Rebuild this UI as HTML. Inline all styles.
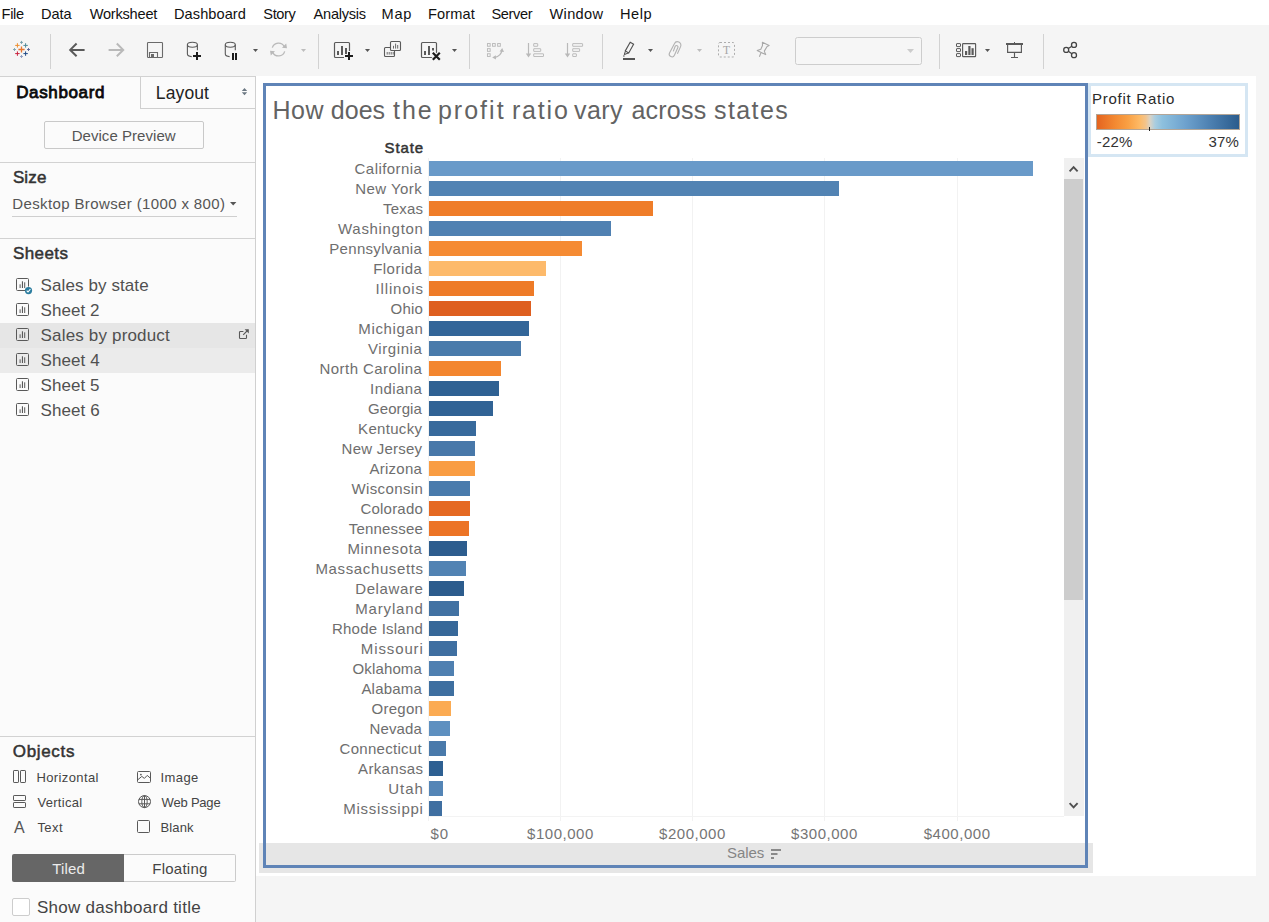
<!DOCTYPE html>
<html lang="en"><head><meta charset="utf-8"><title>Tableau - Dashboard</title>
<style>
html,body{margin:0;padding:0}
body{width:1269px;height:922px;overflow:hidden;background:#f5f5f5;font-family:"Liberation Sans",Arial,sans-serif;position:relative}
.t{position:absolute;white-space:nowrap;display:block}
#menubar{position:absolute;left:0;top:0;width:1269px;height:25px;background:#fff}
#toolbar{position:absolute;left:0;top:25px;width:1269px;height:51px;background:#f5f5f5}
#toolbar svg,#sidebar svg,#canvas svg{position:absolute;left:0;top:0;display:block}
#sidebar{position:absolute;left:0;top:76px;width:255px;height:846px;background:#fbfbfb;border-right:1px solid #d0d0d0}
#sidebar .topline{position:absolute;left:0;top:0;width:255px;height:1px;background:#d2d2d2}
#layouttab{position:absolute;left:140px;top:1px;width:114px;height:31px;border-left:1px solid #cfcfcf;border-bottom:1px solid #cfcfcf}
.hr{position:absolute;left:0;width:255px;height:1px;background:#d2d2d2}
#devbtn{position:absolute;left:44px;top:45px;width:158px;height:26px;border:1px solid #c9c9c9;border-radius:2px;background:#fbfbfb}
#sizeline{position:absolute;left:12px;top:140px;width:225px;height:1px;background:#cfcfcf}
.hl{position:absolute;left:0;width:255px;height:25px}
#tiled{position:absolute;left:12px;top:778px;width:112px;height:28px;background:#666;border-radius:2px 0 0 2px}
#floating{position:absolute;left:124px;top:778px;width:111px;height:26px;border:1px solid #cbcbcb;border-left:none;border-radius:0 2px 2px 0;background:#fbfbfb}
#chk{position:absolute;left:12px;top:822px;width:16px;height:16px;border:1px solid #cdcdcd;border-radius:2px;background:#fff}
#canvas{position:absolute;left:256px;top:76px;width:1000px;height:800px;background:#fff}
#band{position:absolute;left:3px;top:767px;width:834px;height:30px;background:#e6e6e6}
#sel{position:absolute;left:7px;top:7px;width:819px;height:779px;border:3px solid #5f84b7}
#legend{position:absolute;left:832px;top:7px;width:154px;height:68px;border:3px solid #d5e6f3;background:#fff}
</style></head>
<body>
<div id="menubar">
<span class="t" id="t0" style="left:1.50px;top:7px;font-size:14.6px;line-height:14.6px;color:#111;letter-spacing:-0.266px;">File</span>
<span class="t" id="t1" style="left:41.00px;top:7px;font-size:14.6px;line-height:14.6px;color:#111;letter-spacing:-0.070px;">Data</span>
<span class="t" id="t2" style="left:89.70px;top:7px;font-size:14.6px;line-height:14.6px;color:#111;letter-spacing:-0.229px;">Worksheet</span>
<span class="t" id="t3" style="left:174.00px;top:7px;font-size:14.6px;line-height:14.6px;color:#111;letter-spacing:0.065px;">Dashboard</span>
<span class="t" id="t4" style="left:263.30px;top:7px;font-size:14.6px;line-height:14.6px;color:#111;letter-spacing:-0.391px;">Story</span>
<span class="t" id="t5" style="left:313.60px;top:7px;font-size:14.6px;line-height:14.6px;color:#111;letter-spacing:-0.264px;">Analysis</span>
<span class="t" id="t6" style="left:381.60px;top:7px;font-size:14.6px;line-height:14.6px;color:#111;letter-spacing:0.713px;">Map</span>
<span class="t" id="t7" style="left:428.00px;top:7px;font-size:14.6px;line-height:14.6px;color:#111;letter-spacing:0.107px;">Format</span>
<span class="t" id="t8" style="left:491.50px;top:7px;font-size:14.6px;line-height:14.6px;color:#111;letter-spacing:-0.385px;">Server</span>
<span class="t" id="t9" style="left:549.40px;top:7px;font-size:14.6px;line-height:14.6px;color:#111;letter-spacing:0.367px;">Window</span>
<span class="t" id="t10" style="left:620.00px;top:7px;font-size:14.6px;line-height:14.6px;color:#111;letter-spacing:0.534px;">Help</span>
</div>
<div id="toolbar">
<svg id="tbicons" width="1269" height="51" viewBox="0 25 1269 51"><path d="M18.4 49.5H24.6M21.5 46.4V52.6" stroke="#e8762d" stroke-width="1.3"/>
<path d="M15.2 45.4H19.599999999999998M17.4 43.199999999999996V47.6" stroke="#ee8e2f" stroke-width="1.0"/>
<path d="M23.400000000000002 45.4H27.8M25.6 43.199999999999996V47.6" stroke="#4f8a9a" stroke-width="1.0"/>
<path d="M15.2 53.6H19.599999999999998M17.4 51.4V55.800000000000004" stroke="#c9203c" stroke-width="1.0"/>
<path d="M23.400000000000002 53.6H27.8M25.6 51.4V55.800000000000004" stroke="#1f4a86" stroke-width="1.0"/>
<path d="M20.0 42.4H23.0M21.5 40.9V43.9" stroke="#6f9ba8" stroke-width="0.9"/>
<path d="M20.0 56.5H23.0M21.5 55.0V58.0" stroke="#8b98bd" stroke-width="0.9"/>
<path d="M13.0 49.5H16.0M14.5 48.0V51.0" stroke="#7aa3b0" stroke-width="0.9"/>
<path d="M27.0 49.5H30.0M28.5 48.0V51.0" stroke="#5a6396" stroke-width="0.9"/>
<rect x="50" y="34" width="1" height="35" fill="#d2d2d2"/>
<rect x="318" y="34" width="1" height="35" fill="#d2d2d2"/>
<rect x="469" y="34" width="1" height="35" fill="#d2d2d2"/>
<rect x="602" y="34" width="1" height="35" fill="#d2d2d2"/>
<rect x="939" y="34" width="1" height="35" fill="#d2d2d2"/>
<rect x="1043" y="34" width="1" height="35" fill="#d2d2d2"/>
<path d="M84.6 49.9H70.6M76.6 43.5L70.2 49.9L76.6 56.3" fill="none" stroke="#5a5a5a" stroke-width="2"/>
<path d="M108.6 49.9H122.8M116.8 43.5L123.2 49.9L116.8 56.3" fill="none" stroke="#b9b9b9" stroke-width="2"/>
<rect x="147.5" y="42.5" width="15" height="15" rx="0.8" fill="none" stroke="#6a6a6a" stroke-width="1.1"/><path d="M149.5 57.5V52.5H157.5V57.5" fill="none" stroke="#6a6a6a" stroke-width="1.1"/><rect x="151" y="54" width="3" height="3.5" fill="#6a6a6a"/>
<ellipse cx="192.4" cy="44.8" rx="5" ry="2.5" fill="none" stroke="#5a5a5a" stroke-width="1.1"/><path d="M187.4 44.8V54c0 1.4 2 2.4 4.3 2.6M197.4 44.8V50.3" fill="none" stroke="#5a5a5a" stroke-width="1.1"/>
<path d="M192 56H202M197 51V61" stroke="#f5f5f5" stroke-width="4"/><path d="M193 56H201M197 52V60" stroke="#1c1c1c" stroke-width="2"/>
<ellipse cx="230.3" cy="44.8" rx="5" ry="2.5" fill="none" stroke="#5a5a5a" stroke-width="1.1"/><path d="M225.3 44.8V54c0 1.4 2 2.4 4.3 2.6M235.3 44.8V50.3" fill="none" stroke="#5a5a5a" stroke-width="1.1"/>
<rect x="231" y="52" width="7" height="9" fill="#f5f5f5"/><rect x="232" y="53" width="2" height="7" fill="#1c1c1c"/><rect x="235" y="53" width="2" height="7" fill="#1c1c1c"/>
<path d="M253 49h5l-2.5 3z" fill="#555"/>
<path d="M272.3 47.6A6.5 6.5 0 0 1 284.3 46.6M284.7 51.4A6.5 6.5 0 0 1 272.7 52.4" fill="none" stroke="#b9b9b9" stroke-width="1.3"/><path d="M282 47.8L287 48.2L286.2 43.4z M275 51.2L270 50.8L270.8 55.6z" fill="#b9b9b9"/>
<path d="M301 49h5l-2.5 3z" fill="#bdbdbd"/>
<rect x="334.5" y="42.5" width="15" height="15" rx="1" fill="none" stroke="#5a5a5a" stroke-width="1.2"/><rect x="337" y="51" width="2" height="4" fill="#5a5a5a"/><rect x="341" y="46" width="2" height="9" fill="#5a5a5a"/><rect x="345" y="48" width="2" height="7" fill="#5a5a5a"/>
<path d="M344 56H354M349 51V61" stroke="#f5f5f5" stroke-width="4"/><path d="M345 56H353M349 52V60" stroke="#1c1c1c" stroke-width="2"/>
<path d="M365 49h5l-2.5 3z" fill="#555"/>
<rect x="384.5" y="47.5" width="10" height="9" rx="1" fill="none" stroke="#5a5a5a" stroke-width="1.1"/><path d="M387.2 52v2.6M389.2 52v2.6M391.2 52v2.6M393.2 52v2.6" stroke="#5a5a5a" stroke-width="0.9"/><rect x="390.5" y="41.5" width="10" height="9" rx="1" fill="#f5f5f5" stroke="#5a5a5a" stroke-width="1.1"/><path d="M393.5 45.8v2.8M395.6 43.6v5M397.7 45v3.6" stroke="#5a5a5a" stroke-width="0.9"/>
<rect x="421.5" y="42.5" width="15" height="15" rx="1" fill="none" stroke="#5a5a5a" stroke-width="1.2"/><rect x="424" y="51" width="2" height="4" fill="#5a5a5a"/><rect x="428" y="46" width="2" height="9" fill="#5a5a5a"/><rect x="432" y="48" width="2" height="7" fill="#5a5a5a"/>
<path d="M431.5 51.5L441 61M441 51.5L431.5 61" stroke="#f5f5f5" stroke-width="4.2"/><path d="M432.8 52.8L439.8 59.8M439.8 52.8L432.8 59.8" stroke="#1c1c1c" stroke-width="2.2"/>
<path d="M452 49h5l-2.5 3z" fill="#555"/>
<rect x="487.45" y="43.55" width="2.7" height="2.7" rx="0" fill="none" stroke="#b9b9b9" stroke-width="0.95"/><rect x="492.55" y="43.55" width="2.7" height="2.7" rx="0" fill="none" stroke="#b9b9b9" stroke-width="0.95"/><rect x="497.65" y="43.55" width="2.7" height="2.7" rx="0" fill="none" stroke="#b9b9b9" stroke-width="0.95"/><rect x="487.45" y="48.65" width="2.7" height="2.7" rx="0" fill="none" stroke="#b9b9b9" stroke-width="0.95"/><rect x="487.45" y="53.75" width="2.7" height="2.7" rx="0" fill="none" stroke="#b9b9b9" stroke-width="0.95"/><path d="M494.5 57.6C499 56.6 501.5 54 502 50.2" fill="none" stroke="#b9b9b9" stroke-width="1.2"/><path d="M499.6 51.4L502.2 48L504 52z M495.8 55.2L492.2 57.6L496 59.6z" fill="#b9b9b9"/>
<path d="M528.5 43V55" stroke="#b9b9b9" stroke-width="1.2"/><path d="M525.8 53.4h5.4l-2.7 4z" fill="#b9b9b9"/><rect x="533.7" y="43.6" width="4.0" height="2.7" rx="0.25" fill="none" stroke="#b9b9b9" stroke-width="0.95"/><rect x="533.7" y="48.7" width="7.0" height="2.7" rx="0.25" fill="none" stroke="#b9b9b9" stroke-width="0.95"/><rect x="533.7" y="53.8" width="9.8" height="2.7" rx="0.25" fill="none" stroke="#b9b9b9" stroke-width="0.95"/>
<path d="M567.5 43V55" stroke="#b9b9b9" stroke-width="1.2"/><path d="M564.8 53.4h5.4l-2.7 4z" fill="#b9b9b9"/><rect x="572.7" y="43.6" width="9.9" height="2.7" rx="0.25" fill="none" stroke="#b9b9b9" stroke-width="0.95"/><rect x="572.7" y="48.7" width="6.9" height="2.7" rx="0.25" fill="none" stroke="#b9b9b9" stroke-width="0.95"/><rect x="572.7" y="53.8" width="3.7" height="2.7" rx="0.25" fill="none" stroke="#b9b9b9" stroke-width="0.95"/>
<rect x="623" y="58" width="12" height="2" fill="#555"/><path d="M630.2 42.3L633.6 44.3L628.7 52.9L625.3 50.9z" fill="none" stroke="#505050" stroke-width="1.1"/><path d="M625.4 51.2L624.3 54.6L628.5 52.9" fill="none" stroke="#444" stroke-width="1"/><circle cx="623.9" cy="56" r="0.7" fill="#444"/>
<path d="M648 49h5l-2.5 3z" fill="#555"/>
<path d="M677.4 53.8L680.6 46.6A3.4 3.4 0 0 0 674.4 43.8L669.5 53A2.7 2.7 0 0 0 674.4 55.3L677.9 47.6A1.5 1.5 0 0 0 675.2 46.3L673.3 51.4" fill="none" stroke="#b2b2b2" stroke-width="1.1"/>
<path d="M697 49h5l-2.5 3z" fill="#bdbdbd"/>
<rect x="718.5" y="42.5" width="16" height="14.5" rx="1.5" fill="none" stroke="#adadad" stroke-dasharray="2 2"/><text x="726.5" y="54" font-family="Liberation Serif,serif" font-size="11.5" fill="#a5a5a5" text-anchor="middle">T</text>
<path d="M762.4 42.2L769.1 45.5L767.1 46.5L764.3 51.1L765.7 54.6L757.2 50.5L760.8 49.2L762.5 45.5z M761.1 52.4L759.4 56.7" fill="none" stroke="#a8a8a8" stroke-width="1.1" stroke-linejoin="round"/>
<rect x="795.5" y="37.5" width="126" height="27" rx="2" fill="#f6f6f6" stroke="#cdcdcd"/>
<path d="M907 49h7l-3.5 4z" fill="#cccccc"/>
<rect x="956.5" y="43.6" width="4" height="3" rx="0.4" fill="none" stroke="#5a5a5a"/><rect x="956.5" y="48.6" width="4" height="3" rx="0.4" fill="none" stroke="#5a5a5a"/><rect x="956.5" y="53.6" width="4" height="3" rx="0.4" fill="none" stroke="#5a5a5a"/>
<rect x="962.6" y="43.6" width="13" height="13" rx="0.6" fill="none" stroke="#5a5a5a" stroke-width="1.15"/><rect x="965" y="51" width="2.2" height="4" fill="#5a5a5a"/><rect x="968.3" y="46" width="2.2" height="9" fill="#5a5a5a"/><rect x="971.5" y="48.2" width="2.2" height="6.8" fill="#5a5a5a"/>
<path d="M985 49h5l-2.5 3z" fill="#555"/>
<rect x="1006" y="43" width="17" height="2" fill="#5a5a5a"/><rect x="1014" y="42" width="1" height="1" fill="#5a5a5a"/><path d="M1007.6 45V52.4H1021.4V45M1014.5 52.4V57.4M1011 57.5H1018" fill="none" stroke="#5a5a5a" stroke-width="1.15"/>
<g fill="none" stroke="#444" stroke-width="1.3"><circle cx="1066.2" cy="49.9" r="2.5"/><circle cx="1074" cy="44.9" r="2.5"/><circle cx="1074" cy="55.2" r="2.5"/><path d="M1068.3 48.5L1071.9 46.2M1068.3 51.3L1071.9 53.8"/></g></svg>
</div>
<div id="sidebar">
<div class="topline"></div>
<div id="layouttab"></div>
<div id="devbtn"></div>
<div class="hr" style="top:86px"></div>
<div id="sizeline"></div>
<div class="hr" style="top:162px"></div>
<div class="hl" style="top:247px;background:#e6e6e6"></div>
<div class="hl" style="top:272px;background:#ebebeb"></div>
<div class="hr" style="top:660px"></div>
<div id="tiled"></div><div id="floating"></div><div id="chk"></div>
<svg id="sbicons" width="256" height="846" viewBox="0 76 256 846"><path d="M25 290.5H17.5a1 1 0 0 1 -1 -1V279.5a1 1 0 0 1 1 -1h10a1 1 0 0 1 1 1V286.6" fill="none" stroke="#595959"/>
<rect x="19.6" y="284.3" width="1" height="3.7" fill="#595959"/><rect x="21.9" y="281.3" width="1.1" height="6.7" fill="#595959"/><rect x="24.2" y="282.3" width="1" height="5.7" fill="#595959"/>
<rect x="16.5" y="303.5" width="12" height="12" rx="1" fill="none" stroke="#595959"/>
<rect x="19.6" y="309.3" width="1" height="3.7" fill="#595959"/><rect x="21.9" y="306.3" width="1.1" height="6.7" fill="#595959"/><rect x="24.2" y="307.3" width="1" height="5.7" fill="#595959"/>
<rect x="16.5" y="328.5" width="12" height="12" rx="1" fill="none" stroke="#595959"/>
<rect x="19.6" y="334.3" width="1" height="3.7" fill="#595959"/><rect x="21.9" y="331.3" width="1.1" height="6.7" fill="#595959"/><rect x="24.2" y="332.3" width="1" height="5.7" fill="#595959"/>
<rect x="16.5" y="353.5" width="12" height="12" rx="1" fill="none" stroke="#595959"/>
<rect x="19.6" y="359.3" width="1" height="3.7" fill="#595959"/><rect x="21.9" y="356.3" width="1.1" height="6.7" fill="#595959"/><rect x="24.2" y="357.3" width="1" height="5.7" fill="#595959"/>
<rect x="16.5" y="378.5" width="12" height="12" rx="1" fill="none" stroke="#595959"/>
<rect x="19.6" y="384.3" width="1" height="3.7" fill="#595959"/><rect x="21.9" y="381.3" width="1.1" height="6.7" fill="#595959"/><rect x="24.2" y="382.3" width="1" height="5.7" fill="#595959"/>
<rect x="16.5" y="403.5" width="12" height="12" rx="1" fill="none" stroke="#595959"/>
<rect x="19.6" y="409.3" width="1" height="3.7" fill="#595959"/><rect x="21.9" y="406.3" width="1.1" height="6.7" fill="#595959"/><rect x="24.2" y="407.3" width="1" height="5.7" fill="#595959"/>
<circle cx="28.5" cy="290.6" r="3.6" fill="#2c7d9f"/><path d="M26.7 290.7L28 292L30.4 289.2" fill="none" stroke="#fff" stroke-width="1.1"/>
<path d="M243.4 331.5H240.3a0.8 0.8 0 0 0 -0.8 0.8V337.7a0.8 0.8 0 0 0 0.8 0.8H245.7a0.8 0.8 0 0 0 0.8 -0.8V334.8M243.2 334.8L248 330" fill="none" stroke="#595959" stroke-width="1.1"/><path d="M244.6 329.2H248.8V333.4z" fill="#595959"/>
<g fill="none" stroke="#595959"><rect x="13.5" y="770.5" width="5" height="12" rx="0.6"/><rect x="20.5" y="770.5" width="5" height="12" rx="0.6"/><rect x="13.5" y="795.5" width="12" height="5" rx="0.6"/><rect x="13.5" y="802.5" width="12" height="5" rx="0.6"/><rect x="137.5" y="771.5" width="13" height="11" rx="1"/><path d="M138 779.6L141.8 776.4L144.4 778.4L147.2 775.4L150.4 778.2"/><circle cx="144.5" cy="801.6" r="6"/><ellipse cx="144.5" cy="801.6" rx="2.7" ry="6"/><path d="M144.5 795.6V807.6M138.9 799.4H150.1M138.9 803.8H150.1"/><rect x="137.5" y="820.5" width="12" height="12" rx="1"/></g><circle cx="140.9" cy="774.6" r="0.9" fill="#595959"/>
<path d="M241.8 91L244.5 88L247.2 91z M241.8 92.2h5.4L244.5 95.2z" fill="#6c7883"/>
<path d="M230 202h6.4l-3.2 3.6z" fill="#555"/></svg>
<span class="t" id="t11" style="left:16.20px;top:8px;font-size:17px;line-height:17px;color:#0a0a0a;letter-spacing:0.636px;-webkit-text-stroke:0.8px;">Dashboard</span>
<span class="t" id="t12" style="left:155.80px;top:9px;font-size:17.5px;line-height:17.5px;color:#222;letter-spacing:0.124px;">Layout</span>
<span class="t" id="t13" style="left:71.70px;top:52px;font-size:15px;line-height:15px;color:#555;letter-spacing:0.044px;">Device Preview</span>
<span class="t" id="t14" style="left:12.90px;top:93px;font-size:17px;line-height:17px;color:#333;letter-spacing:0.128px;-webkit-text-stroke:0.5px;">Size</span>
<span class="t" id="t15" style="left:12.30px;top:120px;font-size:15px;line-height:15px;color:#555;letter-spacing:0.374px;">Desktop Browser (1000 x 800)</span>
<span class="t" id="t16" style="left:12.90px;top:169px;font-size:17px;line-height:17px;color:#333;letter-spacing:0.415px;-webkit-text-stroke:0.5px;">Sheets</span>
<span class="t" id="t17" style="left:40.60px;top:201px;font-size:17px;line-height:17px;color:#505050;letter-spacing:0.098px;">Sales by state</span>
<span class="t" id="t18" style="left:40.60px;top:226px;font-size:17px;line-height:17px;color:#505050;letter-spacing:0.025px;">Sheet 2</span>
<span class="t" id="t19" style="left:40.60px;top:251px;font-size:17px;line-height:17px;color:#505050;letter-spacing:0.166px;">Sales by product</span>
<span class="t" id="t20" style="left:40.60px;top:276px;font-size:17px;line-height:17px;color:#505050;letter-spacing:0.075px;">Sheet 4</span>
<span class="t" id="t21" style="left:40.60px;top:301px;font-size:17px;line-height:17px;color:#505050;letter-spacing:0.042px;">Sheet 5</span>
<span class="t" id="t22" style="left:40.60px;top:326px;font-size:17px;line-height:17px;color:#505050;letter-spacing:0.075px;">Sheet 6</span>
<span class="t" id="t23" style="left:12.80px;top:667px;font-size:17px;line-height:17px;color:#333;letter-spacing:0.661px;-webkit-text-stroke:0.5px;">Objects</span>
<span class="t" id="t24" style="left:36.40px;top:695px;font-size:13px;line-height:13px;color:#444;letter-spacing:0.396px;">Horizontal</span>
<span class="t" id="t25" style="left:37.40px;top:720px;font-size:13px;line-height:13px;color:#444;letter-spacing:0.308px;">Vertical</span>
<span class="t" id="t26" style="left:37.40px;top:745px;font-size:13px;line-height:13px;color:#444;letter-spacing:0.457px;">Text</span>
<span class="t" id="t27" style="left:160.60px;top:695px;font-size:13px;line-height:13px;color:#444;letter-spacing:0.375px;">Image</span>
<span class="t" id="t28" style="left:161.60px;top:720px;font-size:13px;line-height:13px;color:#444;letter-spacing:-0.205px;">Web Page</span>
<span class="t" id="t29" style="left:160.60px;top:745px;font-size:13px;line-height:13px;color:#444;letter-spacing:0.095px;">Blank</span>
<span class="t" id="t30" style="left:14.10px;top:744px;font-size:16px;line-height:16px;color:#555;">A</span>
<span class="t" id="t31" style="left:52.30px;top:785px;font-size:15px;line-height:15px;color:#ececec;letter-spacing:0.122px;">Tiled</span>
<span class="t" id="t32" style="left:152.30px;top:785px;font-size:15px;line-height:15px;color:#444;letter-spacing:0.240px;">Floating</span>
<span class="t" id="t33" style="left:36.90px;top:823px;font-size:17px;line-height:17px;color:#444;letter-spacing:0.262px;">Show dashboard title</span>
</div>
<div id="canvas">
<div id="band"></div>
<div id="legend"></div>
<svg id="chart" width="1000" height="800" viewBox="256 76 1000 800"><rect x="428" y="158" width="1" height="663" fill="#f2f2f2"/>
<rect x="560" y="158" width="1" height="663" fill="#f2f2f2"/>
<rect x="692" y="158" width="1" height="663" fill="#f2f2f2"/>
<rect x="824" y="158" width="1" height="663" fill="#f2f2f2"/>
<rect x="957" y="158" width="1" height="663" fill="#f2f2f2"/>
<rect x="429" y="816" width="635" height="1" fill="#f3f3f3"/>
<rect x="429" y="161" width="604" height="15" fill="#699ac9"/>
<rect x="429" y="181" width="410" height="15" fill="#5283b3"/>
<rect x="429" y="201" width="224" height="15" fill="#ef7d29"/>
<rect x="429" y="221" width="182" height="15" fill="#5081b2"/>
<rect x="429" y="241" width="153" height="15" fill="#f58b33"/>
<rect x="429" y="261" width="117" height="15" fill="#fdba6b"/>
<rect x="429" y="281" width="105" height="15" fill="#ee7b28"/>
<rect x="429" y="301" width="102" height="15" fill="#de5f20"/>
<rect x="429" y="321" width="100" height="15" fill="#336699"/>
<rect x="429" y="341" width="92" height="15" fill="#4a7bab"/>
<rect x="429" y="361" width="72" height="15" fill="#f3862f"/>
<rect x="429" y="381" width="70" height="15" fill="#2f6193"/>
<rect x="429" y="401" width="64" height="15" fill="#316395"/>
<rect x="429" y="421" width="47" height="15" fill="#386a9c"/>
<rect x="429" y="441" width="46" height="15" fill="#4878a9"/>
<rect x="429" y="461" width="46" height="15" fill="#f99d43"/>
<rect x="429" y="481" width="41" height="15" fill="#4a7bac"/>
<rect x="429" y="501" width="41" height="15" fill="#e56922"/>
<rect x="429" y="521" width="40" height="15" fill="#ec7426"/>
<rect x="429" y="541" width="38" height="15" fill="#2d5d8e"/>
<rect x="429" y="561" width="37" height="15" fill="#5283b3"/>
<rect x="429" y="581" width="35" height="15" fill="#2c5c8d"/>
<rect x="429" y="601" width="30" height="15" fill="#4272a3"/>
<rect x="429" y="621" width="29" height="15" fill="#376899"/>
<rect x="429" y="641" width="28" height="15" fill="#3f6fa1"/>
<rect x="429" y="661" width="25" height="15" fill="#4f80b1"/>
<rect x="429" y="681" width="25" height="15" fill="#3e6fa0"/>
<rect x="429" y="701" width="22" height="15" fill="#fbab53"/>
<rect x="429" y="721" width="21" height="15" fill="#5e90c0"/>
<rect x="429" y="741" width="17" height="15" fill="#4a7aab"/>
<rect x="429" y="761" width="14" height="15" fill="#2e6092"/>
<rect x="429" y="781" width="14" height="15" fill="#5485b6"/>
<rect x="429" y="801" width="13" height="15" fill="#3f6fa1"/>
<rect x="1064" y="158" width="20" height="658" fill="#f0f0f0"/><rect x="1064" y="179" width="19" height="421" fill="#cdcdcd"/>
<path d="M1069.6 171.4L1073.6 167.2L1077.6 171.4M1069.6 803.2L1073.6 807.4L1077.6 803.2" fill="none" stroke="#505050" stroke-width="1.9"/>
<rect x="771" y="849" width="10" height="2" fill="#8a8a8a"/><rect x="771" y="853" width="6.5" height="2" fill="#8a8a8a"/><rect x="771" y="857" width="3" height="2" fill="#8a8a8a"/>
<defs><linearGradient id="lg" x1="0" x2="1" y1="0" y2="0"><stop offset="0" stop-color="#e4631f"/><stop offset="0.13" stop-color="#f38932"/><stop offset="0.22" stop-color="#f9a044"/><stop offset="0.3" stop-color="#fdb965"/><stop offset="0.345" stop-color="#f3c48c"/><stop offset="0.375" stop-color="#d9d3c6"/><stop offset="0.41" stop-color="#a9cde0"/><stop offset="0.46" stop-color="#8dc0de"/><stop offset="0.62" stop-color="#6ea2ce"/><stop offset="0.8" stop-color="#4c7fb0"/><stop offset="1" stop-color="#2a5b8c"/></linearGradient></defs>
<rect x="1096.5" y="114.5" width="143" height="15" fill="url(#lg)" stroke="#b3a596"/>
<rect x="1149" y="127" width="1" height="4" fill="#222"/></svg>
<div id="sel"></div>
<span class="t" id="t34" style="left:16.40px;top:22px;font-size:25px;line-height:25px;color:#636363;letter-spacing:0.521px;">How</span>
<span class="t" id="t35" style="left:74.80px;top:22px;font-size:25px;line-height:25px;color:#636363;letter-spacing:0.030px;">does</span>
<span class="t" id="t36" style="left:137.10px;top:22px;font-size:25px;line-height:25px;color:#636363;letter-spacing:1.925px;">the</span>
<span class="t" id="t37" style="left:181.90px;top:22px;font-size:25px;line-height:25px;color:#636363;letter-spacing:2.033px;">profit</span>
<span class="t" id="t38" style="left:256.00px;top:22px;font-size:25px;line-height:25px;color:#636363;letter-spacing:1.793px;">ratio</span>
<span class="t" id="t39" style="left:318.00px;top:22px;font-size:25px;line-height:25px;color:#636363;letter-spacing:0.390px;">vary</span>
<span class="t" id="t40" style="left:375.40px;top:22px;font-size:25px;line-height:25px;color:#636363;letter-spacing:0.233px;">across</span>
<span class="t" id="t41" style="left:458.00px;top:22px;font-size:25px;line-height:25px;color:#636363;letter-spacing:1.420px;">states</span>
<span class="t" id="t42" style="left:128.50px;top:64px;font-size:15px;line-height:15px;color:#333;letter-spacing:0.904px;-webkit-text-stroke:0.5px;">State</span>
<span class="t" id="t81" style="left:471.10px;top:769px;font-size:15px;line-height:15px;color:#858585;letter-spacing:-0.105px;">Sales</span>
<span class="t" id="t43" style="left:98.60px;top:85px;font-size:15px;line-height:15px;color:#6e6e6e;letter-spacing:0.431px;">California</span>
<span class="t" id="t44" style="left:99.20px;top:105px;font-size:15px;line-height:15px;color:#6e6e6e;letter-spacing:0.451px;">New York</span>
<span class="t" id="t45" style="left:127.00px;top:125px;font-size:15px;line-height:15px;color:#6e6e6e;letter-spacing:0.204px;">Texas</span>
<span class="t" id="t46" style="left:82.10px;top:145px;font-size:15px;line-height:15px;color:#6e6e6e;letter-spacing:0.676px;">Washington</span>
<span class="t" id="t47" style="left:73.30px;top:165px;font-size:15px;line-height:15px;color:#6e6e6e;letter-spacing:0.302px;">Pennsylvania</span>
<span class="t" id="t48" style="left:117.20px;top:185px;font-size:15px;line-height:15px;color:#6e6e6e;letter-spacing:0.465px;">Florida</span>
<span class="t" id="t49" style="left:119.60px;top:205px;font-size:15px;line-height:15px;color:#6e6e6e;letter-spacing:0.817px;">Illinois</span>
<span class="t" id="t50" style="left:134.60px;top:225px;font-size:15px;line-height:15px;color:#6e6e6e;letter-spacing:0.186px;">Ohio</span>
<span class="t" id="t51" style="left:102.30px;top:245px;font-size:15px;line-height:15px;color:#6e6e6e;letter-spacing:0.645px;">Michigan</span>
<span class="t" id="t52" style="left:112.00px;top:265px;font-size:15px;line-height:15px;color:#6e6e6e;letter-spacing:0.584px;">Virginia</span>
<span class="t" id="t53" style="left:63.60px;top:285px;font-size:15px;line-height:15px;color:#6e6e6e;letter-spacing:0.426px;">North Carolina</span>
<span class="t" id="t54" style="left:114.10px;top:305px;font-size:15px;line-height:15px;color:#6e6e6e;letter-spacing:0.422px;">Indiana</span>
<span class="t" id="t55" style="left:112.00px;top:325px;font-size:15px;line-height:15px;color:#6e6e6e;letter-spacing:0.080px;">Georgia</span>
<span class="t" id="t56" style="left:102.10px;top:345px;font-size:15px;line-height:15px;color:#6e6e6e;letter-spacing:0.314px;">Kentucky</span>
<span class="t" id="t57" style="left:85.60px;top:365px;font-size:15px;line-height:15px;color:#6e6e6e;letter-spacing:0.227px;">New Jersey</span>
<span class="t" id="t58" style="left:113.40px;top:385px;font-size:15px;line-height:15px;color:#6e6e6e;letter-spacing:0.264px;">Arizona</span>
<span class="t" id="t59" style="left:95.50px;top:405px;font-size:15px;line-height:15px;color:#6e6e6e;letter-spacing:0.374px;">Wisconsin</span>
<span class="t" id="t60" style="left:104.40px;top:425px;font-size:15px;line-height:15px;color:#6e6e6e;letter-spacing:0.224px;">Colorado</span>
<span class="t" id="t61" style="left:92.80px;top:445px;font-size:15px;line-height:15px;color:#6e6e6e;letter-spacing:0.186px;">Tennessee</span>
<span class="t" id="t62" style="left:91.40px;top:465px;font-size:15px;line-height:15px;color:#6e6e6e;letter-spacing:0.654px;">Minnesota</span>
<span class="t" id="t63" style="left:59.50px;top:485px;font-size:15px;line-height:15px;color:#6e6e6e;letter-spacing:0.622px;">Massachusetts</span>
<span class="t" id="t64" style="left:99.20px;top:505px;font-size:15px;line-height:15px;color:#6e6e6e;letter-spacing:0.611px;">Delaware</span>
<span class="t" id="t65" style="left:99.20px;top:525px;font-size:15px;line-height:15px;color:#6e6e6e;letter-spacing:0.850px;">Maryland</span>
<span class="t" id="t66" style="left:76.00px;top:545px;font-size:15px;line-height:15px;color:#6e6e6e;letter-spacing:0.222px;">Rhode Island</span>
<span class="t" id="t67" style="left:104.80px;top:565px;font-size:15px;line-height:15px;color:#6e6e6e;letter-spacing:0.885px;">Missouri</span>
<span class="t" id="t68" style="left:96.50px;top:585px;font-size:15px;line-height:15px;color:#6e6e6e;letter-spacing:0.140px;">Oklahoma</span>
<span class="t" id="t69" style="left:105.40px;top:605px;font-size:15px;line-height:15px;color:#6e6e6e;letter-spacing:0.207px;">Alabama</span>
<span class="t" id="t70" style="left:115.50px;top:625px;font-size:15px;line-height:15px;color:#6e6e6e;letter-spacing:0.262px;">Oregon</span>
<span class="t" id="t71" style="left:113.50px;top:645px;font-size:15px;line-height:15px;color:#6e6e6e;letter-spacing:0.128px;">Nevada</span>
<span class="t" id="t72" style="left:83.60px;top:665px;font-size:15px;line-height:15px;color:#6e6e6e;letter-spacing:0.286px;">Connecticut</span>
<span class="t" id="t73" style="left:102.10px;top:685px;font-size:15px;line-height:15px;color:#6e6e6e;letter-spacing:0.339px;">Arkansas</span>
<span class="t" id="t74" style="left:132.20px;top:705px;font-size:15px;line-height:15px;color:#6e6e6e;letter-spacing:0.986px;">Utah</span>
<span class="t" id="t75" style="left:87.30px;top:725px;font-size:15px;line-height:15px;color:#6e6e6e;letter-spacing:0.702px;">Mississippi</span>
<span class="t" id="t76" style="left:174.60px;top:750px;font-size:15px;line-height:15px;color:#757575;letter-spacing:0.758px;">$0</span>
<span class="t" id="t77" style="left:271.00px;top:750px;font-size:15px;line-height:15px;color:#757575;letter-spacing:0.540px;">$100,000</span>
<span class="t" id="t78" style="left:403.00px;top:750px;font-size:15px;line-height:15px;color:#757575;letter-spacing:0.540px;">$200,000</span>
<span class="t" id="t79" style="left:535.00px;top:750px;font-size:15px;line-height:15px;color:#757575;letter-spacing:0.540px;">$300,000</span>
<span class="t" id="t80" style="left:667.70px;top:750px;font-size:15px;line-height:15px;color:#757575;letter-spacing:0.540px;">$400,000</span>
<span class="t" id="t82" style="left:836.00px;top:15px;font-size:15px;line-height:15px;color:#2a2a2a;letter-spacing:0.741px;">Profit Ratio</span>
<span class="t" id="t83" style="left:840.70px;top:58px;font-size:15px;line-height:15px;color:#333;letter-spacing:0.207px;">-22%</span>
<span class="t" id="t84" style="left:952.40px;top:58px;font-size:15px;line-height:15px;color:#333;letter-spacing:0.158px;">37%</span>
</div>
</body></html>
